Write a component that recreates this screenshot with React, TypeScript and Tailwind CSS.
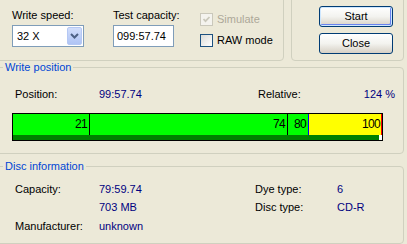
import React from "react";

const NAVY = "text-[#000080]";

function Checkbox({ checked, disabled }: { checked?: boolean; disabled?: boolean }) {
  return (
    <span
      className={`w-[13px] h-[13px] flex items-center justify-center border ${
        disabled
          ? "border-[#CAC8BB] bg-[#F4F3EE]"
          : "border-[#1C5180] bg-gradient-to-br from-[#DCDCD7] to-white"
      }`}
    >
      {checked && (
        <svg width="9" height="9" viewBox="0 0 9 9">
          <path d="M1.5 4 L3.5 6.2 L7.5 2" fill="none" stroke={disabled ? "#CAC8BB" : "#21A121"} strokeWidth="1.8" />
        </svg>
      )}
    </span>
  );
}

function XpButton({ label, isDefault }: { label: string; isDefault?: boolean }) {
  return (
    <button
      className={`w-[74px] h-[21px] rounded-[3px] border border-[#003C74] bg-gradient-to-b from-white via-[#F3F3EF] to-[#D6D0C5] text-black leading-[13px] ${
        isDefault ? "shadow-[inset_0_0_0_1px_#CEE7FF,inset_-1px_-1px_0_1px_#6982EE]" : ""
      }`}
    >
      {label}
    </button>
  );
}

export default function App() {
  return (
    <div className="w-[407px] h-[244px] overflow-hidden bg-[#ECE9D8] font-['Liberation_Sans',Arial,sans-serif] text-[11px] leading-[13px] text-black whitespace-nowrap">
      <div className="-ml-[8px] -mt-[8px] w-[412px] flex flex-col">
        {/* top row */}
        <div className="flex gap-[7px] h-[69px]">
          <div className="w-[292px] rounded-[4px] border border-[#D0D0BF] pl-[19px] pt-[16px] flex">
            <div className="flex flex-col w-[72px]">
              <span>Write speed:</span>
              <div className="mt-[3px] h-[22px] border border-[#7F9DB9] bg-white flex items-center">
                <span className="flex-1 pl-[4px]">32 X</span>
                <span className="w-[15px] h-[18px] mr-[1px] rounded-[2px] border border-[#B5C8F4] bg-gradient-to-b from-[#D2DEFB] to-[#AFC4F5] flex items-center justify-center">
                  <svg width="9" height="6" viewBox="0 0 9 6">
                    <path d="M1 1 L4.5 4.5 L8 1" fill="none" stroke="#4D6185" strokeWidth="2" />
                  </svg>
                </span>
              </div>
            </div>
            <div className="ml-[29px] flex flex-col w-[61px]">
              <span>Test capacity:</span>
              <div className="mt-[3px] h-[22px] border border-[#7F9DB9] bg-white flex items-center pl-[3px]">
                099:57.74
              </div>
            </div>
            <div className="ml-[26px] flex flex-col">
              <div className="mt-[4px] h-[13px] flex items-center gap-[4px] text-[#ACA899]">
                <Checkbox checked disabled />
                <span>Simulate</span>
              </div>
              <div className="mt-[8px] h-[13px] flex items-center gap-[4px]">
                <Checkbox />
                <span>RAW mode</span>
              </div>
            </div>
          </div>
          <div className="w-[113px] rounded-[4px] border border-[#D0D0BF] pl-[27px] pt-[13px] flex flex-col gap-[6px]">
            <XpButton label="Start" isDefault />
            <XpButton label="Close" />
          </div>
        </div>

        {/* write position */}
        <fieldset className="w-[412px] rounded-[4px] border border-[#D0D0BF]">
          <legend className="ml-[10px] px-[2px] text-[#0046D5] leading-[13px]">Write position</legend>
          <div className="pl-[19px] pr-[8px] pt-[14px] pb-[12px]">
            <div className="flex pl-[3px]">
              <span className="w-[84px]">Position:</span>
              <span className={`w-[159px] ${NAVY}`}>99:57.74</span>
              <span className="flex-1">Relative:</span>
              <span className={NAVY}>124 %</span>
            </div>
            <div className="mt-[12px] w-[371px] border border-black flex flex-col text-[12px] tracking-[-0.7px]">
              <div className="flex h-[21px] items-center">
                <span className="w-[76px] h-full bg-[#00FF00] flex items-center justify-end pr-[2px]">21</span>
                <span className="w-[1px] h-full bg-black" />
                <span className="w-[197px] h-full bg-[#00FF00] flex items-center justify-end pr-[2px]">74</span>
                <span className="w-[1px] h-full bg-black" />
                <span className="w-[20px] h-full bg-[#00FF00] flex items-center justify-end pr-[2px]">80</span>
                <span className="w-[1px] h-full bg-[#0000FF]" />
                <span className="w-[72px] h-full bg-[#FFFF00] flex items-center justify-end pr-[1px]">100</span>
                <span className="w-[1px] h-full bg-[#FF0000]" />
              </div>
              <div className="flex h-[5px]">
                <span className="flex-1 bg-[#008000]" />
                <span className="w-[3px] bg-white" />
              </div>
            </div>
          </div>
        </fieldset>

        {/* disc information */}
        <fieldset className="mt-[6px] w-[412px] rounded-[4px] border border-[#D0D0BF]">
          <legend className="ml-[10px] px-[2px] text-[#0046D5] leading-[13px]">Disc information</legend>
          <div className="pl-[22px] pt-[10px] pb-[10px] grid grid-cols-[84px_156px_82px_1fr]">
            <span>Capacity:</span>
            <span className={NAVY}>79:59.74</span>
            <span>Dye type:</span>
            <span className={NAVY}>6</span>
            <span className="mt-[5px]" />
            <span className={`mt-[5px] ${NAVY}`}>703 MB</span>
            <span className="mt-[5px]">Disc type:</span>
            <span className={`mt-[5px] ${NAVY}`}>CD-R</span>
            <span className="mt-[6px]">Manufacturer:</span>
            <span className={`mt-[6px] ${NAVY}`}>unknown</span>
          </div>
        </fieldset>
      </div>
    </div>
  );
}
